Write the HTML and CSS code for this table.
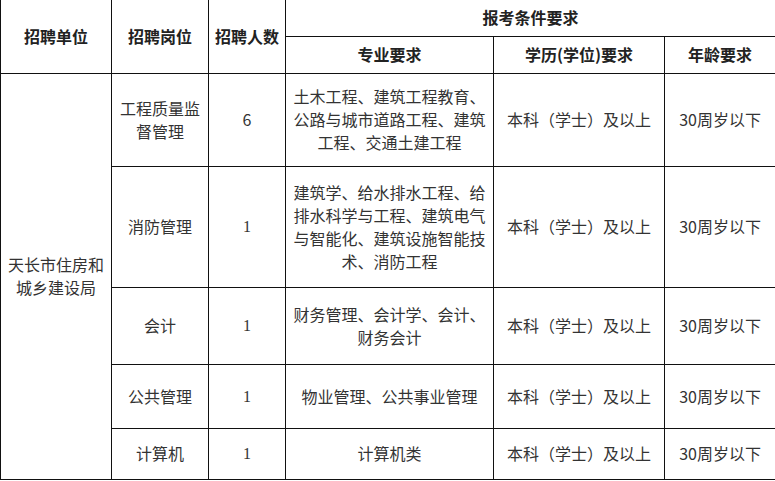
FILE: index.html
```html
<!DOCTYPE html>
<html lang="zh-CN">
<head>
<meta charset="utf-8">
<title>招聘岗位表</title>
<link rel="stylesheet" href="styles.css">
</head>
<body>
<table class="grid">
  <colgroup>
    <col class="c1"><col class="c2"><col class="c3"><col class="c4"><col class="c5"><col class="c6">
  </colgroup>
  <thead>
    <tr class="h1">
      <th rowspan="2" class="top">招聘单位</th>
      <th rowspan="2" class="top">招聘岗位</th>
      <th rowspan="2" class="top">招聘人数</th>
      <th colspan="3" class="top">报考条件要求</th>
    </tr>
    <tr class="h2">
      <th>专业要求</th>
      <th>学历(学位)要求</th>
      <th>年龄要求</th>
    </tr>
  </thead>
  <tbody>
    <tr class="r1">
      <td rowspan="5">天长市住房和<br>城乡建设局</td>
      <td>工程质量监<br>督管理</td>
      <td>6</td>
      <td>土木工程、建筑工程教育、<br>公路与城市道路工程、建筑<br>工程、交通土建工程</td>
      <td>本科（学士）及以上</td>
      <td>30周岁以下</td>
    </tr>
    <tr class="r2">
      <td>消防管理</td>
      <td class="num">1</td>
      <td>建筑学、给水排水工程、给<br>排水科学与工程、建筑电气<br>与智能化、建筑设施智能技<br>术、消防工程</td>
      <td>本科（学士）及以上</td>
      <td>30周岁以下</td>
    </tr>
    <tr class="r3">
      <td>会计</td>
      <td class="num">1</td>
      <td>财务管理、会计学、会计、<br>财务会计</td>
      <td>本科（学士）及以上</td>
      <td>30周岁以下</td>
    </tr>
    <tr class="r4">
      <td>公共管理</td>
      <td class="num">1</td>
      <td>物业管理、公共事业管理</td>
      <td>本科（学士）及以上</td>
      <td>30周岁以下</td>
    </tr>
    <tr class="r5">
      <td>计算机</td>
      <td class="num">1</td>
      <td>计算机类</td>
      <td>本科（学士）及以上</td>
      <td>30周岁以下</td>
    </tr>
  </tbody>
</table>
</body>
</html>
```

FILE: styles.css
```css
html, body {
  margin: 0;
  padding: 0;
  background: #ffffff;
}
body {
  font-family: "Noto Sans CJK SC", "Noto Sans", sans-serif;
  color: #333333;
}
.grid {
  border-collapse: collapse;
  table-layout: fixed;
  width: 775px;
}
.c1 { width: 111px; }
.c2 { width: 97px; }
.c3 { width: 77px; }
.c4 { width: 208px; }
.c5 { width: 171px; }
.c6 { width: 111px; }
.grid th,
.grid td {
  border: 1px solid #111111;
  padding: 0;
  text-align: center;
  vertical-align: middle;
  font-size: 16px;
  line-height: 23px;
}
.grid th {
  font-weight: bold;
  color: #222222;
}
.grid th.top {
  border-top: none;
}
.num {
  font-family: "Liberation Serif", "Noto Sans CJK SC", serif;
  font-size: 17px;
}
.h1 { height: 36px; }
.h2 { height: 37px; }
.r1 { height: 93px; }
.r2 { height: 121px; }
.r3 { height: 77px; }
.r4 { height: 64px; }
.r5 { height: 51px; }
```
